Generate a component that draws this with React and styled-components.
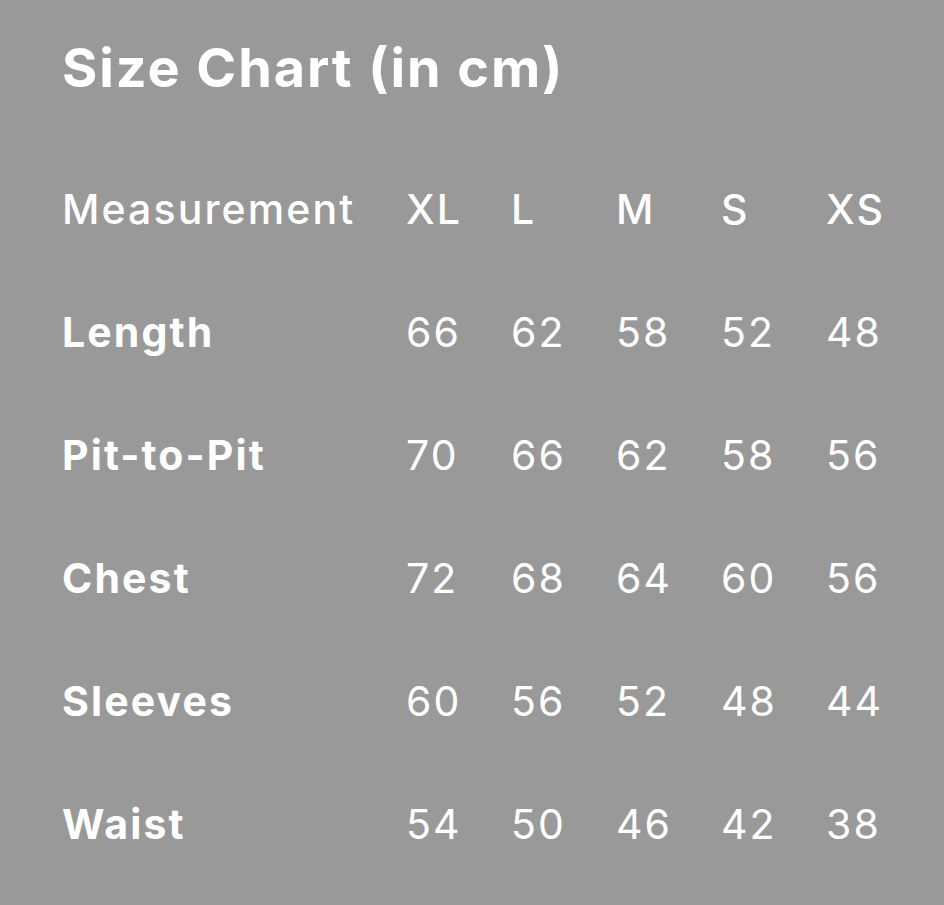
import React from 'react';
import styled, { createGlobalStyle } from 'styled-components';

const GlobalStyle = createGlobalStyle`
  html, body {
    margin: 0;
    padding: 0;
    background: #999999;
  }
  body {
    font-family: Inter, "Noto Sans", sans-serif;
    color: #ffffff;
  }
`;

const Page = styled.section`
  min-height: 905px;
  box-sizing: border-box;
  padding: 35px 0 0 62px;
`;

const Title = styled.h1`
  margin: 0 0 48px;
  font-size: 54px;
  line-height: 65px;
  font-weight: 700;
  letter-spacing: 1.9px;
`;

const Table = styled.div`
  display: grid;
  grid-template-columns: 344px repeat(5, 105px);
  grid-auto-rows: 123px;
  align-items: center;
`;

const Cell = styled.div`
  font-size: 41px;
  line-height: 123px;
  letter-spacing: 2.1px;
  white-space: nowrap;
  font-weight: ${p => (p.$bold ? 700 : p.$head ? 500 : 400)};
`;

const sizes = ['XL', 'L', 'M', 'S', 'XS'];

const rows = [
  { label: 'Length', values: [66, 62, 58, 52, 48] },
  { label: 'Pit-to-Pit', values: [70, 66, 62, 58, 56] },
  { label: 'Chest', values: [72, 68, 64, 60, 56] },
  { label: 'Sleeves', values: [60, 56, 52, 48, 44] },
  { label: 'Waist', values: [54, 50, 46, 42, 38] },
];

export default function App() {
  return (
    <>
      <GlobalStyle />
      <Page>
        <Title>Size Chart (in cm)</Title>
        <Table>
          <Cell $head>Measurement</Cell>
          {sizes.map(s => (
            <Cell key={s} $head>{s}</Cell>
          ))}
          {rows.map(r => (
            <React.Fragment key={r.label}>
              <Cell $bold>{r.label}</Cell>
              {r.values.map((v, i) => (
                <Cell key={i}>{v}</Cell>
              ))}
            </React.Fragment>
          ))}
        </Table>
      </Page>
    </>
  );
}
